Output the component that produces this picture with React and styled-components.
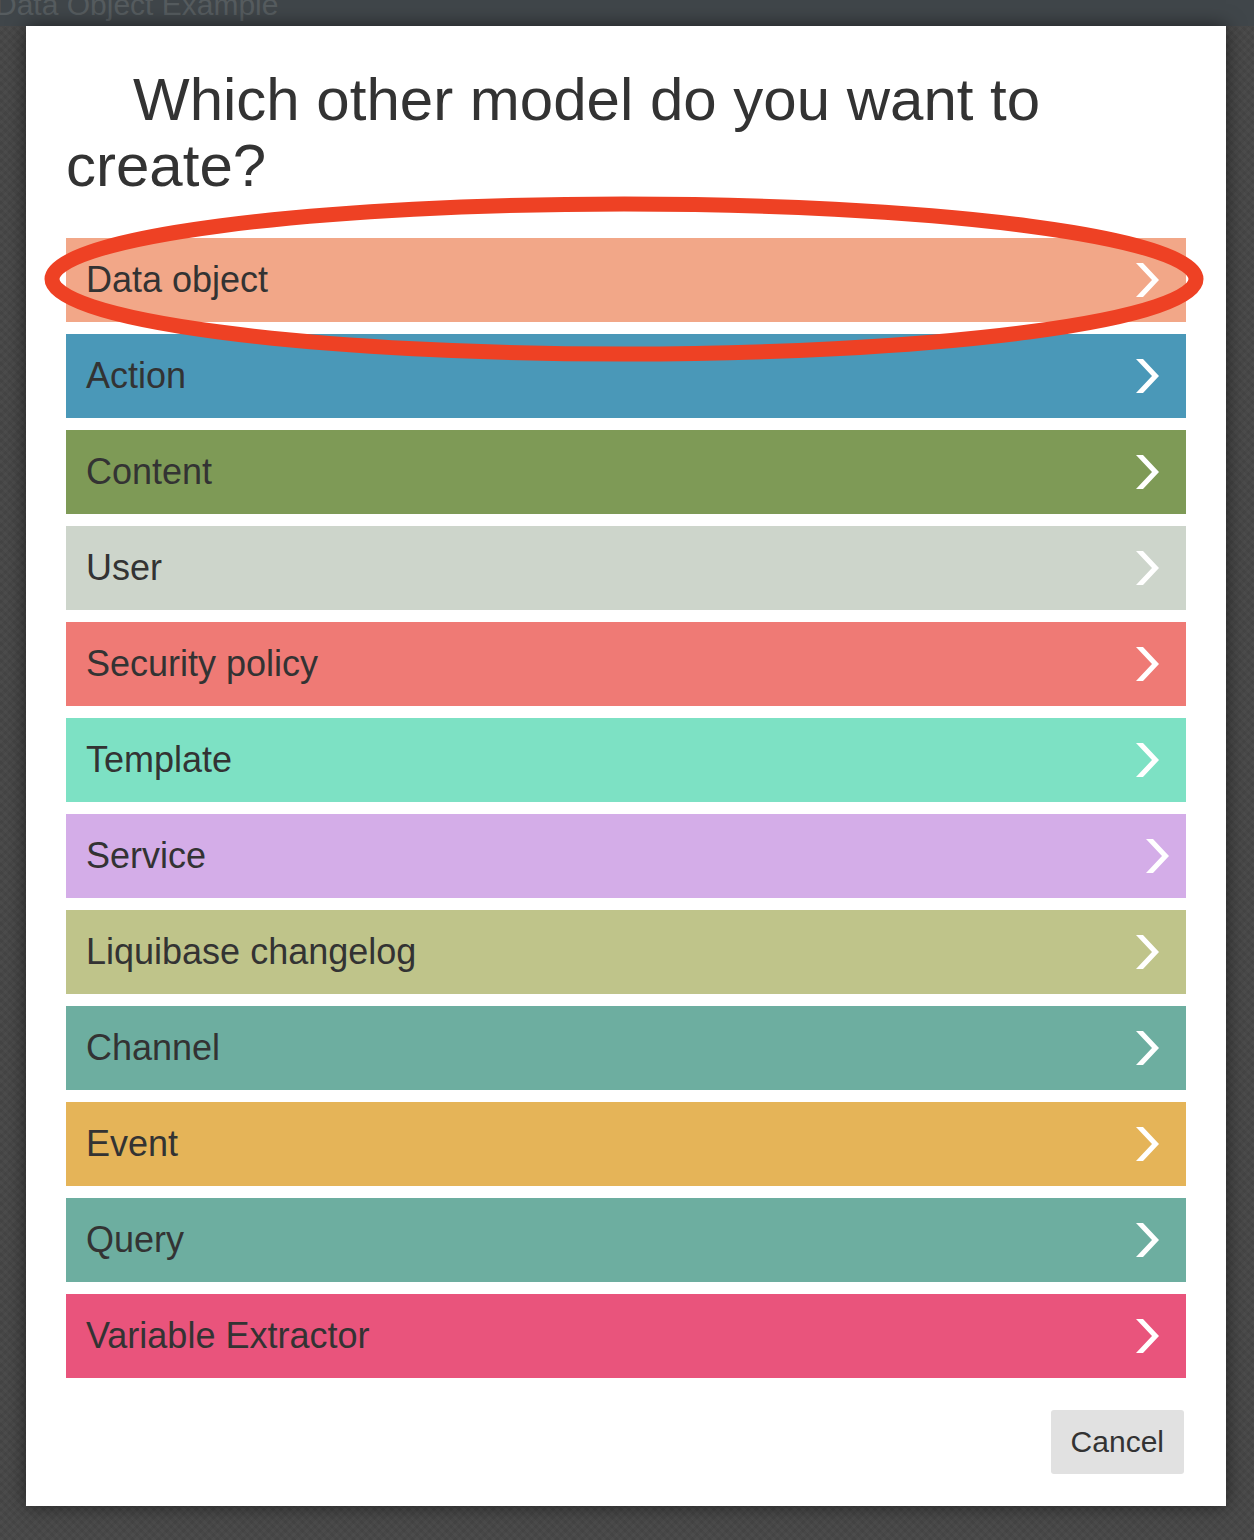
import React from 'react'
import styled, { createGlobalStyle } from 'styled-components'

const GlobalStyle = createGlobalStyle`
  html, body {
    margin: 0;
    padding: 0;
  }
  body {
    font-family: 'Liberation Sans', Arial, Helvetica, sans-serif;
    background-color: #484848;
    background-image:
      repeating-linear-gradient(45deg, rgba(255, 255, 255, 0.025) 0 3px, transparent 3px 6px),
      repeating-linear-gradient(-45deg, rgba(0, 0, 0, 0.05) 0 3px, transparent 3px 6px);
  }
`

const Page = styled.div`
  position: relative;
  width: 1254px;
  height: 1540px;
  overflow: hidden;
`

const TopBar = styled.div`
  height: 26px;
  background: #40464a;
  overflow: hidden;
`

const PageTitle = styled.div`
  margin-left: -5px;
  margin-top: -12px;
  font-size: 30px;
  line-height: 34px;
  color: #565c5f;
  white-space: nowrap;
`

const Modal = styled.div`
  position: relative;
  margin-left: 26px;
  width: 1200px;
  box-sizing: border-box;
  padding: 41px 40px 32px;
  background: #ffffff;
  box-shadow: 0 0 18px rgba(0, 0, 0, 0.55);
`

const Question = styled.h1`
  margin: 0 0 39px;
  font-size: 60px;
  line-height: 66px;
  font-weight: normal;
  color: #333333;
  text-indent: 67px;
`

const ModelList = styled.div`
  display: flex;
  flex-direction: column;
  gap: 12px;
`

const ModelRow = styled.div`
  display: flex;
  align-items: center;
  justify-content: space-between;
  height: 84px;
  padding: 0 27px 0 20px;
  background: ${(p) => p.bg};
  color: #333333;
  font-size: 36px;
  cursor: pointer;
`

const Chevron = styled.svg`
  width: 23px;
  height: 34px;
  flex: none;
  transform: translateX(${(p) => p.shift || 0}px);
`

const Footer = styled.div`
  display: flex;
  justify-content: flex-end;
  margin-top: 32px;
  padding-right: 2px;
`

const CancelButton = styled.button`
  height: 64px;
  padding: 0 20px;
  border: none;
  border-radius: 3px;
  background: #e1e1e1;
  color: #333333;
  font-family: inherit;
  font-size: 30px;
`

const Highlight = styled.svg`
  position: absolute;
  left: 0;
  top: 0;
  width: 1200px;
  height: 400px;
  overflow: visible;
  pointer-events: none;
`

const models = [
  { label: 'Data object', bg: '#f2a788' },
  { label: 'Action', bg: '#4a98b8' },
  { label: 'Content', bg: '#7e9a56' },
  { label: 'User', bg: '#cdd5cb' },
  { label: 'Security policy', bg: '#ef7a75' },
  { label: 'Template', bg: '#7de1c4' },
  { label: 'Service', bg: '#d4ade8', shift: 10 },
  { label: 'Liquibase changelog', bg: '#bfc48a' },
  { label: 'Channel', bg: '#6daea0' },
  { label: 'Event', bg: '#e5b458' },
  { label: 'Query', bg: '#6daea0' },
  { label: 'Variable Extractor', bg: '#e9547c' },
]

function ChevronIcon({ shift }) {
  return (
    <Chevron viewBox="0 0 23 34" shift={shift}>
      <polygon points="0,0 7,0 23,17 7,34 0,34 16,17" fill="#ffffff" />
    </Chevron>
  )
}

export default function App() {
  return (
    <>
      <GlobalStyle />
      <Page>
        <TopBar>
          <PageTitle>Data Object Example</PageTitle>
        </TopBar>
        <Modal>
          <Question>Which other model do you want to create?</Question>
          <ModelList>
            {models.map((m) => (
              <ModelRow key={m.label} bg={m.bg}>
                <span>{m.label}</span>
                <ChevronIcon shift={m.shift} />
              </ModelRow>
            ))}
          </ModelList>
          <Footer>
            <CancelButton type="button">Cancel</CancelButton>
          </Footer>
          <Highlight viewBox="0 0 1200 400">
            <ellipse
              cx="598"
              cy="253"
              rx="572"
              ry="75"
              fill="none"
              stroke="#ee4124"
              strokeWidth="15"
            />
          </Highlight>
        </Modal>
      </Page>
    </>
  )
}
